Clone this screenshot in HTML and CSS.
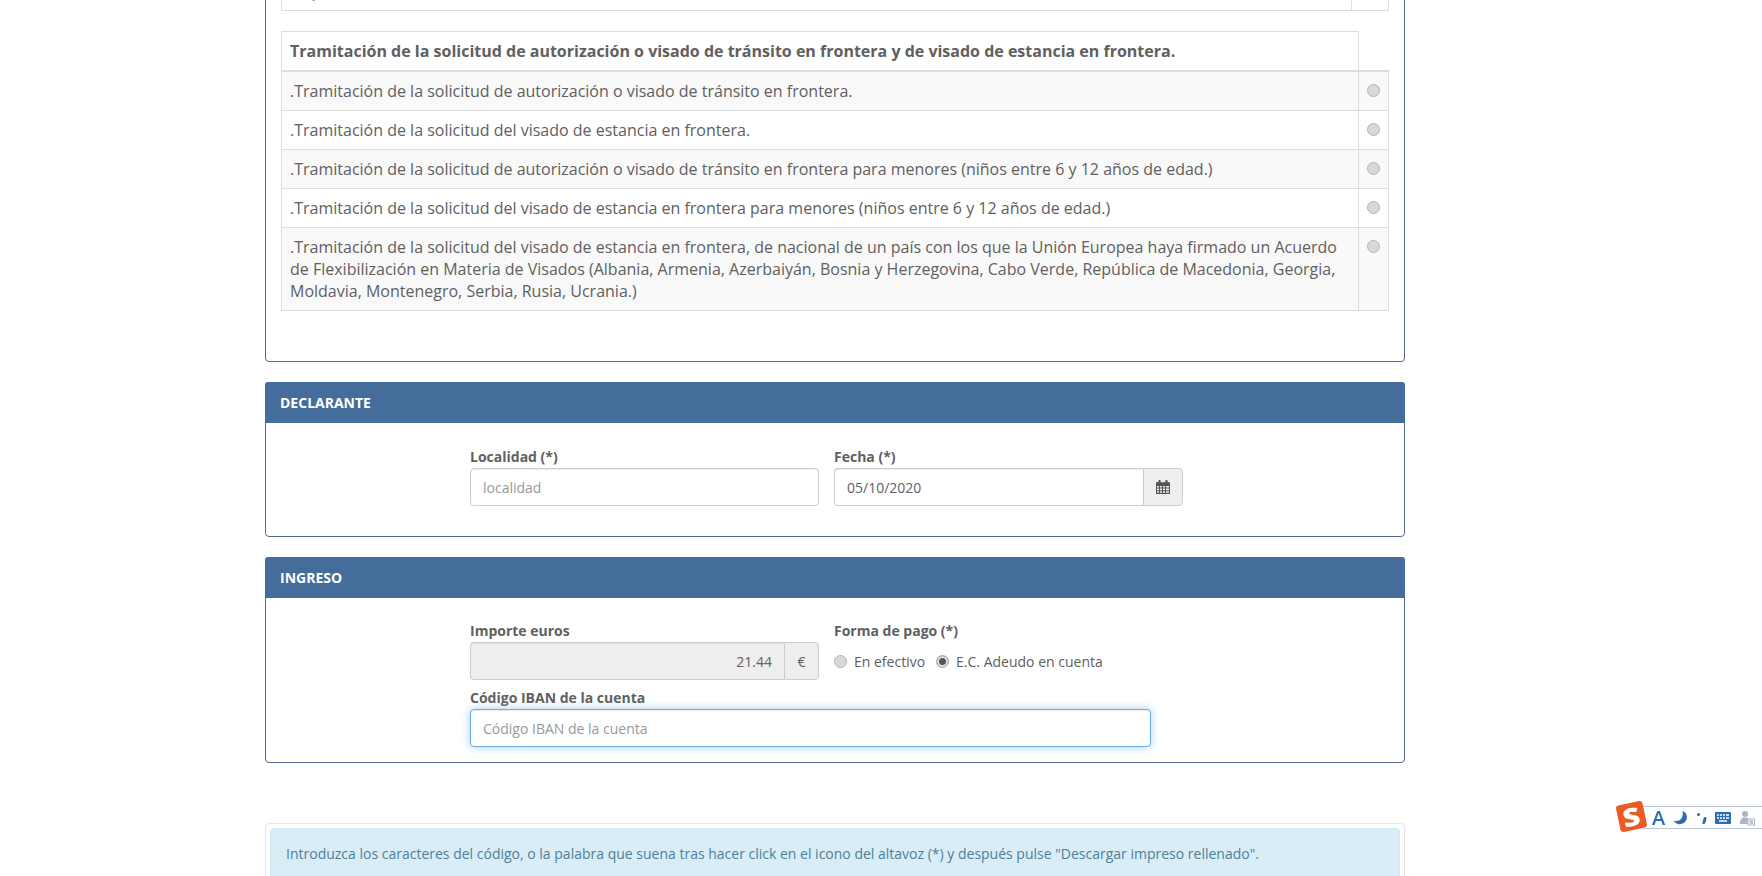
FILE: index.html
```html
<!DOCTYPE html>
<html lang="es">
<head>
<meta charset="utf-8">
<title>Impreso</title>
<link rel="stylesheet" href="styles.css">
</head>
<body>
<div class="page">
  <section class="panel panel-first">
    <div class="panel-body">
      <table class="grid grid-clip">
        <tr><td>.Expedición</td><td class="col-check"></td></tr>
      </table>
      <table class="grid grid-main">
        <thead>
          <tr><th>Tramitación de la solicitud de autorización o visado de tránsito en frontera y de visado de estancia en frontera.</th><th class="th-empty"></th></tr>
        </thead>
        <tbody>
          <tr class="odd"><td>.Tramitación de la solicitud de autorización o visado de tránsito en frontera.</td><td class="col-radio"><input type="radio" name="t" class="radio"></td></tr>
          <tr><td>.Tramitación de la solicitud del visado de estancia en frontera.</td><td class="col-radio"><input type="radio" name="t" class="radio"></td></tr>
          <tr class="odd"><td>.Tramitación de la solicitud de autorización o visado de tránsito en frontera para menores (niños entre 6 y 12 años de edad.)</td><td class="col-radio"><input type="radio" name="t" class="radio"></td></tr>
          <tr><td>.Tramitación de la solicitud del visado de estancia en frontera para menores (niños entre 6 y 12 años de edad.)</td><td class="col-radio"><input type="radio" name="t" class="radio"></td></tr>
          <tr class="odd"><td>.Tramitación de la solicitud del visado de estancia en frontera, de nacional de un país con los que la Unión Europea haya firmado un Acuerdo de Flexibilización en Materia de Visados (Albania, Armenia, Azerbaiyán, Bosnia y Herzegovina, Cabo Verde, República de Macedonia, Georgia, Moldavia, Montenegro, Serbia, Rusia, Ucrania.)</td><td class="col-radio"><input type="radio" name="t" class="radio"></td></tr>
        </tbody>
      </table>
    </div>
  </section>

  <section class="panel">
    <h2 class="panel-head">DECLARANTE</h2>
    <div class="form-body form-declarante">
      <div class="form-row">
        <div class="field">
          <label class="lbl">Localidad (*)</label>
          <input class="ctl" type="text" placeholder="localidad">
        </div>
        <div class="field">
          <label class="lbl">Fecha (*)</label>
          <div class="group">
            <input class="ctl" type="text" value="05/10/2020">
            <span class="addon addon-cal">
              <svg width="14" height="14" viewBox="0 0 14 14"><path fill="#555" d="M0 2.2h2.4V1a1 1 0 0 1 1-1h.3a1 1 0 0 1 1 1v1.2h4.600V1a1 1 0 0 1 1-1h.3a1 1 0 0 1 1 1v1.2H14V14H0z"/><path fill="#eee" d="M1 6h2v1.600H1zM4 6h2v1.600H4zM7 6h2v1.600H7zM10 6h3v1.600h-3zM1 8.600h2v1.600H1zM4 8.600h2v1.600H4zM7 8.600h2v1.600H7zM10 8.600h3v1.600h-3zM1 11.200h2v1.600H1zM4 11.200h2v1.600H4zM7 11.200h2v1.600H7zM10 11.200h3v1.600h-3z"/></svg>
            </span>
          </div>
        </div>
      </div>
    </div>
  </section>

  <section class="panel">
    <h2 class="panel-head">INGRESO</h2>
    <div class="form-body form-ingreso">
      <div class="form-row">
        <div class="field">
          <label class="lbl">Importe euros</label>
          <div class="group">
            <input class="ctl ctl-disabled" type="text" value="21.44" readonly>
            <span class="addon addon-euro">€</span>
          </div>
        </div>
        <div class="field">
          <label class="lbl">Forma de pago (*)</label>
          <div class="radios">
            <label class="radio-opt"><input type="radio" name="p" class="radio">En efectivo</label>
            <label class="radio-opt"><input type="radio" name="p" class="radio" checked>E.C. Adeudo en cuenta</label>
          </div>
        </div>
      </div>
      <div class="field field-iban">
        <label class="lbl">Código IBAN de la cuenta</label>
        <input class="ctl ctl-focus" type="text" placeholder="Código IBAN de la cuenta">
      </div>
    </div>
  </section>

  <section class="well">
    <div class="alert">Introduzca los caracteres del código, o la palabra que suena tras hacer click en el icono del altavoz (*) y después pulse "Descargar impreso rellenado".</div>
  </section>
</div>

<div class="ime">
  <span class="ime-logo"><span class="ime-s">S</span></span>
  <span class="ime-a">A</span>
  <svg class="ime-ico" width="16" height="16" viewBox="0 0 16 16"><path fill="#2a6db5" d="M9.500 1c3.600 1.200 5.300 5 4 8.600C12.300 13 8.500 15 5 14c-2-.5-3.500-1.800-4.300-3.600 2.500 1 5.500.6 7.300-1.400 1.700-2 2.300-5.300 1.500-8z"/></svg>
  <span class="ime-punct"><i class="dot"></i><i class="comma"></i></span>
  <svg class="ime-ico" width="16" height="12" viewBox="0 0 16 12"><rect width="16" height="12" rx="1" fill="#2a6db5"/><path fill="#fff" d="M2 2.200h2v1.600H2zM5 2.200h2v1.600H5zM8 2.200h2v1.600H8zM11 2.200h3v1.600h-3zM2 5.200h2v1.600H2zM5 5.200h2v1.600H5zM8 5.200h2v1.600H8zM11 5.200h3v1.600h-3zM4 8.200h8v1.600H4z"/></svg>
  <svg class="ime-ico" width="16" height="16" viewBox="0 0 16 16"><circle cx="6" cy="4" r="3" fill="#a9b6c4"/><path fill="#a9b6c4" d="M1 13c0-4 2-5.500 5-5.500 1.500 0 2.500.3 3 1V14H1z"/><rect x="9" y="9" width="6.500" height="6" fill="#fff" stroke="#a9b6c4"/><path stroke="#7f8e9e" d="M10.500 11h3.500M10.500 13h3.500"/></svg>
</div>
</body>
</html>
```
FILE: styles.css
```css
* { box-sizing: border-box; }
html, body { margin: 0; padding: 0; height: 876px; overflow: hidden; background: #fff; }
body { font-family: "Open Sans", "Liberation Sans", sans-serif; font-size: 14px; color: #606060; }

.page { width: 1140px; margin: -30px 0 0 265px; }

.panel { border: 1px solid #55698f; border-radius: 4px; margin-bottom: 20px; background: #fff; }
.panel-body { padding: 0 15px 50px; }
.panel-head { margin: -1px -1px 0; height: 41px; padding: 0 15px; background: #456d9b; color: #fff; font-size: 14px; font-weight: 700; line-height: 41px; border-radius: 3px 3px 0 0; }

.grid { border-collapse: collapse; width: 100%; table-layout: fixed; font-size: 16px; line-height: 22px; }
.grid td, .grid th { border: 1px solid #ddd; padding: 8px 7px; vertical-align: top; text-align: left; }
.grid td:first-child, .grid th:first-child { padding-left: 8px; }
.grid-clip { margin-bottom: 20px; }
.col-check { width: 37px; }
.grid-main th { font-weight: 700; padding-top: 8px; padding-bottom: 8px; border-bottom: 2px solid #ddd; }
.grid-main .th-empty { border: 0; border-bottom: 2px solid #ddd; width: 30px; padding: 0; }
.col-radio { text-align: center !important; padding: 0 !important; }
.grid-main tr.odd td { background: #f9f9f9; }

.radio { appearance: none; -webkit-appearance: none; width: 13px; height: 13px; margin: 0; border-radius: 50%; background: #d8d8d8; border: 1px solid #b4b4b4; display: inline-block; vertical-align: middle; }
.col-radio .radio { margin-top: 12px; display: block; margin-left: 8px; }
.radio:checked { background: #555; box-shadow: inset 0 0 0 2px #e4e4e4; }

.form-body { padding: 0 0 0 204px; }
.form-declarante { height: 113px; padding-top: 24px; }
.form-ingreso { height: 164px; padding-top: 23px; }
.form-row { display: flex; gap: 15px; }
.field { width: 349px; display: flex; flex-direction: column; }
.lbl { font-weight: 700; font-size: 14px; line-height: 20px; height: 21px; }
.ctl { width: 100%; min-width: 0; height: 38px; padding: 6px 12px; border: 1px solid #ccc; border-radius: 4px; font: 14px/20px "Open Sans", "Liberation Sans", sans-serif; color: #606060; background: #fff; box-shadow: inset 0 1px 1px rgba(0,0,0,.075); outline: none; }
.ctl::placeholder { color: #999; opacity: 1; }
.ctl-disabled { background: #eee; text-align: right; }
.ctl-focus { border-color: #66afe9; box-shadow: inset 0 1px 1px rgba(0,0,0,.075), 0 0 8px rgba(102,175,233,.6); flex: none; }
.group { display: flex; height: 38px; }
.group .ctl { flex: 1; border-radius: 4px 0 0 4px; border-right: 0; }
.addon { background: #eee; border: 1px solid #ccc; border-radius: 0 4px 4px 0; display: flex; align-items: center; justify-content: center; color: #606060; flex: none; }
.addon-cal { width: 40px; }
.addon-euro { width: 35px; }
.radios { display: flex; height: 38px; align-items: center; gap: 11px; }
.radio-opt { display: flex; align-items: center; gap: 7px; }
.field-iban { width: 681px; margin-top: 8px; }

.well { border: 1px solid #e3e3e3; border-radius: 4px; padding: 4px; margin-top: 60px; height: 80px; }
.alert { background: #d9edf7; color: #4f7f98; border-radius: 4px; padding: 15px; border: 1px solid #d2e9f4; line-height: 20px; height: 70px; }

.ime { position: fixed; left: 1643px; top: 806px; width: 119px; height: 23px; border-top: 1px solid #b9c6d8; border-bottom: 1px solid #b9c6d8; background: #fff; display: flex; align-items: center; gap: 8px; padding-left: 9px; }
.ime-logo { position: absolute; left: -25px; top: -4px; width: 27px; height: 27px; background: #ee5a24; border-radius: 3px; transform: rotate(-12deg); display: flex; align-items: center; justify-content: center; }
.ime-s { color: #fff; font-family: "Open Sans", sans-serif; font-weight: 800; font-size: 25px; line-height: 27px; transform: scaleX(1.2); }
.ime-a { color: #2a6db5; font: 600 20px/21px "Open Sans", sans-serif; }
.ime-ico { flex: none; }
.ime-punct { position: relative; width: 10px; height: 14px; flex: none; }
.dot { position: absolute; left: 0; top: 2px; width: 3px; height: 3px; border-radius: 50%; background: #2a6db5; }
.comma { position: absolute; left: 6px; top: 6px; width: 3px; height: 7px; border-radius: 2px 2px 2px 0; background: #2a6db5; transform: rotate(15deg); }
```
